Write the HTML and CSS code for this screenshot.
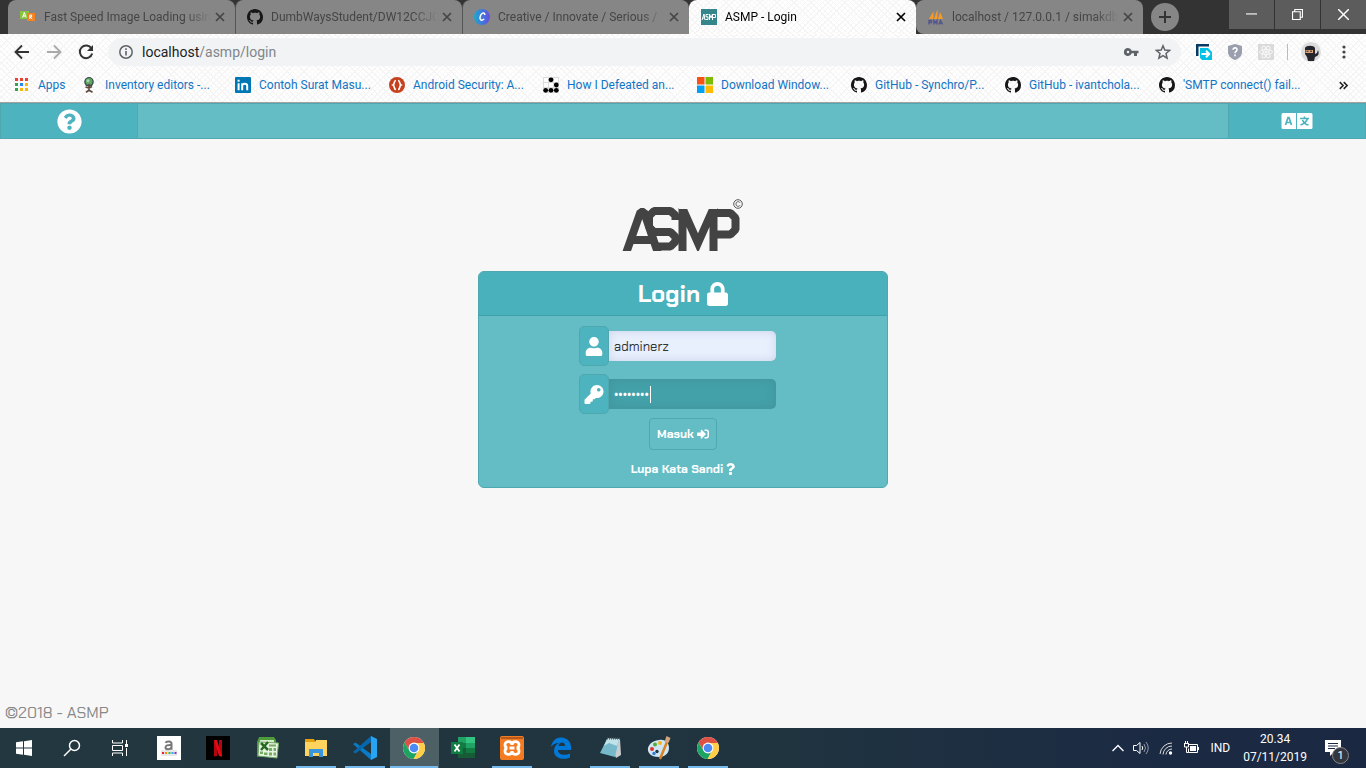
FILE: index.html
```html
<!DOCTYPE html>
<html lang="id">
<head>
<meta charset="utf-8">
<title>ASMP - Login</title>
<link rel="stylesheet" href="styles.css">
</head>
<body>
<svg class="sprite" aria-hidden="true">
  <symbol id="github" viewBox="0 0 16 16"><path fill="#161616" d="M8 0C3.58 0 0 3.58 0 8c0 3.54 2.29 6.53 5.47 7.59.4.07.55-.17.55-.38 0-.19-.01-.82-.01-1.49-2.01.37-2.53-.49-2.69-.94-.09-.23-.48-.94-.82-1.13-.28-.15-.68-.52-.01-.53.63-.01 1.08.58 1.23.82.72 1.21 1.87.87 2.33.66.07-.52.28-.87.51-1.07-1.78-.2-3.64-.89-3.64-3.95 0-.87.31-1.59.82-2.15-.08-.2-.36-1.02.08-2.12 0 0 .67-.21 2.2.82.64-.18 1.32-.27 2-.27s1.36.09 2 .27c1.53-1.04 2.2-.82 2.2-.82.44 1.1.16 1.92.08 2.12.51.56.82 1.27.82 2.15 0 3.07-1.87 3.75-3.65 3.95.29.25.54.73.54 1.48 0 1.07-.01 1.93-.01 2.2 0 .21.15.46.55.38A8.01 8.01 0 0 0 16 8c0-4.42-3.58-8-8-8z"/></symbol>
  <symbol id="close" viewBox="0 0 10 10"><path d="M1 1l8 8M9 1L1 9" stroke="currentColor" stroke-width="1.7" fill="none"/></symbol>
  <symbol id="chrome" viewBox="0 0 24 24"><circle cx="12" cy="12" r="11" fill="#fff"/><path fill="#dd5144" d="M2.47 6.5A11 11 0 0 1 21.53 6.5L21.8 7H12a5 5 0 0 0-4.33 7.5z"/><path fill="#1da462" d="M2.47 6.5A11 11 0 0 0 11.6 23l4.73-8.5A5 5 0 0 1 7.67 14.5z"/><path fill="#ffcd46" d="M21.8 7A11 11 0 0 1 11.6 23l4.73-8.5A5 5 0 0 0 12 7z"/><circle cx="12" cy="12" r="5.4" fill="#fff"/><circle cx="12" cy="12" r="4.3" fill="#4c8bf5"/></symbol>
</svg>

<header class="browser">
  <div class="tabstrip">
    <div class="tabs">
      <div class="tab">
        <svg class="fav" viewBox="0 0 16 16"><path fill="#8ac43f" d="M0 2h9v8H0z"/><path fill="#f58220" d="M7 4h8v8H7z"/><path d="M2.500 8.500l1.800-5 1.800 5M3 7h2.700M9.800 10V6h1.800v2H9.800l2.500 2" stroke="#fff" fill="none"/></svg>
        <span class="title">Fast Speed Image Loading usin</span><button class="x" aria-label="Close tab"><svg><use href="#close"/></svg></button>
      </div>
      <div class="tab split">
        <svg class="fav"><use href="#github"/></svg>
        <span class="title">DumbWaysStudent/DW12CCJC</span><button class="x" aria-label="Close tab"><svg><use href="#close"/></svg></button>
      </div>
      <div class="tab split">
        <svg class="fav" viewBox="0 0 16 16"><defs><linearGradient id="cv" x1="0" x2="1"><stop stop-color="#18a9d2"/><stop offset="1" stop-color="#6a4be0"/></linearGradient></defs><circle cx="8" cy="8" r="8" fill="url(#cv)"/><path d="M10.800 6c.3-3-3-2.500-4.300.5-1.500 3.500.2 6.200 3.700 3.500" stroke="#fff" stroke-width="1.500" fill="none"/></svg>
        <span class="title">Creative / Innovate / Serious /</span><button class="x" aria-label="Close tab"><svg><use href="#close"/></svg></button>
      </div>
      <div class="tab active">
        <svg class="fav" viewBox="0 0 16 16"><path fill="#34868a" d="M0 0h16v16H0z"/><path d="M1 11l2-6 1 6M2 9h2M7.500 5.500H5v2.300h2v2.700H4.500M8.500 11V5l1.500 4 1.500-4v6M12 5.500h2.500v3H12" stroke="#fff" fill="none"/></svg>
        <span class="title">ASMP - Login</span><button class="x" aria-label="Close tab"><svg><use href="#close"/></svg></button>
      </div>
      <div class="tab last">
        <svg class="fav" viewBox="0 0 16 16"><path fill="#f79a28" d="M1 10L5.500 2v8zM6 10L9.500 0v10zM10 10l2-7 3 7z"/><path d="M1 15.500v-4h2.500v2H1M6 15.500v-4l1.500 2 1.500-2v4M11 15.500l1.500-4 2 4M11.500 14H14" stroke="#53568d" stroke-width="1.400" fill="none"/></svg>
        <span class="title">localhost / 127.0.0.1 / simakdb</span><button class="x" aria-label="Close tab"><svg><use href="#close"/></svg></button>
      </div>
    </div>
    <button class="newtab" aria-label="New tab"><svg viewBox="0 0 12 12"><path d="M6 0v12M0 6h12" stroke="#333" stroke-width="2"/></svg></button>
    <div class="winbtns">
      <button aria-label="Minimize"><svg viewBox="0 0 10 10"><path d="M0 4.500h10" stroke="#fff"/></svg></button>
      <button aria-label="Restore"><svg viewBox="0 0 10 10"><path d="M.5 2.500h7v7h-7zM2.500 2.500v-2h7v7h-2" stroke="#fff" fill="none"/></svg></button>
      <button aria-label="Close"><svg viewBox="0 0 10 10"><path d="M0 0l10 10M10 0L0 10" stroke="#fff" stroke-width="1.300"/></svg></button>
    </div>
  </div>

  <div class="toolbar">
    <button class="nav" aria-label="Back"><svg viewBox="0 0 16 16"><path d="M15 8H2M8 1.500L1.500 8 8 14.500" stroke="#333" stroke-width="1.900" fill="none"/></svg></button>
    <button class="nav" aria-label="Forward"><svg viewBox="0 0 16 16"><path d="M1 8h13M8 1.500L14.500 8 8 14.500" stroke="#aaa" stroke-width="1.900" fill="none"/></svg></button>
    <button class="nav" aria-label="Reload"><svg viewBox="0 0 16 16"><path d="M13.500 4.500A6.300 6.300 0 1 0 14.200 9.500" stroke="#333" stroke-width="2" fill="none"/><path d="M15 1v6H9z" fill="#333"/></svg></button>
    <div class="omnibox">
      <svg class="info" viewBox="0 0 14 14"><circle cx="7" cy="7" r="6.200" stroke="#5f6368" stroke-width="1.500" fill="none"/><path d="M7 6v4.500M7 3.300v1.600" stroke="#5f6368" stroke-width="1.600"/></svg>
      <p class="url">localhost<span>/asmp/login</span></p>
      <svg class="mini" viewBox="0 0 16 16"><path fill="#5f6368" fill-rule="evenodd" d="M5 4a4 4 0 1 0 3.700 5.300H11V12h3V9.300h1.500V6.700H8.700A4 4 0 0 0 5 4zm0 2.700a1.300 1.300 0 1 1 0 2.600 1.300 1.300 0 0 1 0-2.600z"/></svg>
      <svg class="mini" viewBox="0 0 16 16"><path d="M8 1.800l1.800 4.300 4.700.4L11 9.500l1.100 4.700L8 11.700l-4.100 2.500L5 9.500 1.500 6.500l4.700-.4z" stroke="#5f6368" stroke-width="1.500" fill="none"/></svg>
    </div>
    <div class="exts">
      <svg viewBox="0 0 16 16"><path fill="#063b66" d="M0 0h13v2.500H2.500V12H0z"/><path fill="#00c2e5" d="M4 4h8l4 4v8H6l-2-2z"/><path d="M5.500 10H13M10 6.800l3.200 3.200-3.200 3.200" stroke="#fff" stroke-width="2" fill="none"/></svg>
      <svg viewBox="0 0 16 16"><path fill="#9a9fae" d="M8 0l7 2v6c0 4-3 6.500-7 8-4-1.500-7-4-7-8V2z"/><path d="M6 5.800C6 3 10.300 3.300 10 6c-.2 1.500-2 1.500-2 3.200M8 10.500v1.700" stroke="#fff" stroke-width="1.600" fill="none"/></svg>
      <svg viewBox="0 0 16 16"><path fill="#dadada" d="M0 0h16v16H0z"/><g fill="none" stroke="#f7f7f7"><ellipse cx="8" cy="8" rx="6.500" ry="2.500"/><ellipse cx="8" cy="8" rx="6.500" ry="2.500" transform="rotate(60 8 8)"/><ellipse cx="8" cy="8" rx="6.500" ry="2.500" transform="rotate(120 8 8)"/></g><circle cx="8" cy="8" r="1.500" fill="#f7f7f7"/></svg>
      <i class="rule"></i>
      <svg class="avatar" viewBox="0 0 20 20"><circle cx="10" cy="10" r="10" fill="#dcdcdc"/><path fill="#24262b" d="M4 6c1-3 9-3 10 0v6l2-1 1-3c1 2 1 5-1 6l-2 1-1 4H7l-1-4-2-3z"/><path fill="#e1a273" d="M4.500 8H12v3H4.500z"/><path d="M5.500 9.200h2M9 9.200h2" stroke="#222"/></svg>
      <svg class="dots" viewBox="0 0 4 16"><g fill="#444"><circle cx="2" cy="3" r="1.600"/><circle cx="2" cy="8" r="1.600"/><circle cx="2" cy="13" r="1.600"/></g></svg>
    </div>
  </div>

  <nav class="bookmarks">
    <a class="apps" href="#"><svg viewBox="0 0 14 14"><path fill="#e94235" d="M0 0h3v3H0zM5 0h3v3H5zM10 0h3v3h-3z"/><path fill="#34a353" d="M0 5h3v3H0zM0 10h3v3H0z"/><path fill="#2a87f0" d="M5 5h3v3H5z"/><path fill="#fbb505" d="M10 5h3v3h-3zM5 10h3v3H5zM10 10h3v3h-3z"/></svg><span>Apps</span></a>
    <a href="#"><svg viewBox="0 0 16 16"><circle cx="8" cy="4.800" r="4.800" fill="#3b4b4d"/><circle cx="8" cy="4.500" r="3.500" fill="#5fa45f"/><circle cx="7" cy="3.700" r="1.500" fill="#a8d6bd"/><path d="M8 7v6M4.500 10L8 11l3-1.500M5 15.200l3-2 3.500 2" stroke="#5f4a40" stroke-width="1.700" fill="none"/></svg><span>Inventory editors -...</span></a>
    <a href="#"><svg viewBox="0 0 16 16"><rect width="16" height="16" rx="1" fill="#0077b5"/><path d="M3.600 6.200v7M3.600 2.800v2M7.200 13.200v-7M7.200 9c0-3 5-3 5 0v4.200" stroke="#fff" stroke-width="2" fill="none"/></svg><span>Contoh Surat Masu...</span></a>
    <a href="#"><svg viewBox="0 0 16 16"><circle cx="8" cy="8" r="8" fill="#c5411e"/><path d="M7 3.500C4.500 3.500 6 7 4 8c2 1 .5 4.500 3 4.500M9 3.500c2.500 0 1 3.500 3 4.500-2 1-.5 4.500-3 4.500" stroke="#fff" stroke-width="1.700" fill="none"/></svg><span>Android Security: A...</span></a>
    <a href="#"><svg viewBox="0 0 16 16"><path d="M.5.500h15v15H.5zM5.500.500v15M10.500.500v15M.5 5.500h15M.5 10.500h15" stroke="#ddd" fill="#fff"/><circle cx="8" cy="2.800" r="2.400"/><circle cx="13.300" cy="8" r="2.400"/><circle cx="2.700" cy="13.300" r="2.400"/><circle cx="8" cy="13.300" r="2.400"/><circle cx="13.300" cy="13.300" r="2.400"/></svg><span>How I Defeated an...</span></a>
    <a href="#"><svg viewBox="0 0 16 16"><path fill="#f65314" d="M0 0h7.500v7.500H0z"/><path fill="#7cbb00" d="M8.500 0H16v7.500H8.500z"/><path fill="#00a1f1" d="M0 8.500h7.500V16H0z"/><path fill="#ffbb00" d="M8.500 8.500H16V16H8.500z"/></svg><span>Download Window...</span></a>
    <a href="#"><svg><use href="#github"/></svg><span>GitHub - Synchro/P...</span></a>
    <a href="#"><svg><use href="#github"/></svg><span>GitHub - ivantchola...</span></a>
    <a href="#"><svg><use href="#github"/></svg><span>'SMTP connect() fail...</span></a>
    <button class="more" aria-label="More bookmarks"><svg viewBox="0 0 8 8"><path d="M.7 1l3 3-3 3M4.200 1l3 3-3 3" stroke="#222" stroke-width="1.300" fill="none"/></svg></button>
  </nav>
</header>

<div class="page">
  <div class="topbar">
    <button class="side" aria-label="Bantuan"><svg class="help" viewBox="0 0 512 512"><path fill="#fff" d="M504 256c0 136.997-111.043 248-248 248S8 392.997 8 256C8 119.083 119.043 8 256 8s248 111.083 248 248zM262.655 90c-54.497 0-89.255 22.957-116.549 63.758-3.536 5.286-2.353 12.415 2.715 16.258l34.699 26.310c5.205 3.947 12.621 3.008 16.665-2.122 17.864-22.658 30.113-35.797 57.303-35.797 20.429 0 45.698 13.148 45.698 32.958 0 14.976-12.363 22.667-32.534 33.976C247.128 238.528 216 254.941 216 296v4c0 6.627 5.373 12 12 12h56c6.627 0 12-5.373 12-12v-1.333c0-28.462 83.186-29.647 83.186-106.667 0-58.002-60.165-102-116.531-102zM256 338c-25.365 0-46 20.635-46 46 0 25.364 20.635 46 46 46s46-20.636 46-46c0-25.365-20.635-46-46-46z"/></svg></button>
    <div class="middle"></div>
    <button class="side" aria-label="Bahasa"><svg class="lang" viewBox="0 0 32 16"><path fill="#fff" d="M2 0h13v16H2a1.500 1.500 0 0 1-1.500-1.500v-13A1.500 1.500 0 0 1 2 0zM16 0h14a1.500 1.500 0 0 1 1.500 1.500v13A1.500 1.500 0 0 1 30 16H16z"/><path d="M4.500 12L7 4.500h1L10.500 12M5.500 9.500h4M19 5.500h9M23.500 3.500v2M26.500 5.500c-1 3.500-4 5.500-7 6.500M21.500 7c1 2.500 3 4.500 6 5" stroke="#4db3be" stroke-width="1.700" fill="none"/></svg></button>
  </div>

  <main>
    <svg class="logo" viewBox="0 0 122 52" role="img" aria-label="ASMP">
      <g fill="none" stroke="#434343" stroke-width="8" stroke-linejoin="bevel">
        <path d="M2 60L18.500 13H22L38 60M11 41h20"/>
        <path d="M53.500 21v-4.500l-5-4.500H32l-5 5V28l5 5H48.500l5 5v4.500l-5 5H34"/>
        <path d="M60.500 60V10M91.500 60V10M60 8L76 44 92 8" stroke-linejoin="miter"/>
        <path d="M88 14h20.500l5 5v11.500l-5 5H92"/>
      </g>
      <path d="M57 0h38v10H57z" fill="#f7f7f7"/>
      <g fill="none" stroke="#555"><circle cx="116" cy="5" r="4.300"/><path d="M118 3.700c-1.500-2-4-1-4 1.300s2.500 3.300 4 1.300"/></g>
    </svg>

    <form class="card">
      <h1>Login <svg class="lock" viewBox="0 0 448 512"><path fill="#fff" d="M400 224h-24v-72C376 68.200 307.800 0 224 0S72 68.200 72 152v72H48c-26.500 0-48 21.500-48 48v192c0 26.500 21.500 48 48 48h352c26.500 0 48-21.500 48-48V272c0-26.500-21.500-48-48-48zm-104 0H152v-72c0-39.700 32.300-72 72-72s72 32.300 72 72v72z"/></svg></h1>
      <div class="row">
        <label for="user" aria-label="Nama pengguna"><svg viewBox="0 0 448 512"><path fill="#fff" d="M224 256c70.700 0 128-57.300 128-128S294.700 0 224 0 96 57.300 96 128s57.300 128 128 128zm89.600 32h-16.700c-22.200 10.200-46.900 16-72.900 16s-50.600-5.800-72.900-16h-16.700C60.200 288 0 348.200 0 422.400V464c0 26.500 21.500 48 48 48h352c26.500 0 48-21.500 48-48v-41.600c0-74.200-60.200-134.400-134.400-134.400z"/></svg></label>
        <input id="user" class="filled" type="text" value="adminerz">
      </div>
      <div class="row">
        <label for="pass" aria-label="Kata sandi"><svg viewBox="0 0 512 512"><path fill="#fff" d="M512 176.001C512 273.203 433.202 352 336 352c-11.220 0-22.190-1.062-32.827-3.069l-24.012 27.014A23.999 23.999 0 0 1 261.223 384H224v40c0 13.255-10.745 24-24 24h-40v40c0 13.255-10.745 24-24 24H24c-13.255 0-24-10.745-24-24v-78.059c0-6.365 2.529-12.470 7.029-16.971l161.802-161.802C163.108 213.814 160 195.271 160 176 160 78.798 238.797.001 335.999 0 433.488-.001 512 78.511 512 176.001zM336 128c0 26.510 21.490 48 48 48s48-21.490 48-48-21.490-48-48-48-48 21.490-48 48z"/></svg></label>
        <input id="pass" type="password" value="password">
        <i class="caret"></i>
      </div>
      <button class="submit" type="button">Masuk <svg viewBox="0 0 512 512"><path fill="#fff" d="M416 448h-84c-6.600 0-12-5.400-12-12v-40c0-6.600 5.400-12 12-12h84c17.700 0 32-14.300 32-32V160c0-17.700-14.300-32-32-32h-84c-6.600 0-12-5.400-12-12V76c0-6.600 5.400-12 12-12h84c53 0 96 43 96 96v192c0 53-43 96-96 96zm-47-201L201 79c-15-15-41-4.500-41 17v96H24c-13.300 0-24 10.700-24 24v96c0 13.300 10.700 24 24 24h136v96c0 21.500 26 32 41 17l168-168c9.300-9.400 9.300-24.600 0-34z"/></svg></button>
      <a class="forgot" href="#">Lupa Kata Sandi <svg viewBox="0 0 384 512"><path fill="#fff" d="M202.021 0C122.202 0 70.503 32.703 29.914 91.026c-7.363 10.580-5.093 25.086 5.178 32.874l43.138 32.709c10.373 7.865 25.132 6.026 33.253-4.148 25.049-31.381 43.630-49.449 82.757-49.449 30.764 0 68.816 19.799 68.816 49.631 0 22.552-18.617 34.134-48.993 51.164-35.423 19.860-82.299 44.576-82.299 106.405V320c0 13.255 10.745 24 24 24h72.471c13.255 0 24-10.745 24-24v-5.773c0-42.860 125.268-44.645 125.268-160.627C377.504 66.256 286.902 0 202.021 0zM192 373.459c-38.196 0-69.271 31.075-69.271 69.271 0 38.195 31.075 69.270 69.271 69.270s69.271-31.075 69.271-69.270-31.075-69.271-69.271-69.271z"/></svg></a>
    </form>
  </main>
  <footer>©2018 - ASMP</footer>
</div>

<div class="taskbar">
  <div class="launch">
    <button aria-label="Start"><svg viewBox="0 0 24 24"><path fill="#fff" d="M4 6.300l7-1v6.200H4zM12 5.200L20 4v7.500h-8zM4 12.500h7v6.200l-7-1zM12 12.500h8V20l-8-1.200z"/></svg></button>
    <button aria-label="Search"><svg viewBox="0 0 24 24"><circle cx="14.500" cy="9.500" r="5" stroke="#fff" stroke-width="1.500" fill="none"/><path d="M11 13l-7 7" stroke="#fff" stroke-width="1.500"/></svg></button>
    <button aria-label="Task view"><svg viewBox="0 0 24 24"><path d="M4.500 4v3h10V4M4.500 20v-3h10v3M4.500 9.500h10v5h-10zM18.500 4v4M18.500 12v8" stroke="#fff" fill="none"/><path fill="#fff" d="M17 8h3v3h-3z"/></svg></button>
    <button aria-label="Amazon"><svg viewBox="0 0 24 24"><path fill="#fff" d="M0 0h24v24H0z"/><path fill="#e8e8e8" d="M4 14h16v6H4z"/><path d="M8.500 6.800c1-2 6-2 6 .8v6.200M14.500 9c-4-.2-6 .5-6 2.500s4 3 6-.3" stroke="#777" stroke-width="2" fill="none"/><path stroke-width="2" stroke="#e22" d="M5 17h2"/><path stroke-width="2" stroke="#f80" d="M8 17h2"/><path stroke-width="2" stroke="#3b5" d="M11.500 17h2"/><path stroke-width="2" stroke="#3ae" d="M14.500 17h2"/><path stroke-width="2" stroke="#83c" d="M17.500 17h2"/></svg></button>
    <button aria-label="Netflix"><svg viewBox="0 0 24 24"><path d="M0 0h24v24H0z"/><path fill="#b20710" d="M8 4h3v16l-3 .5zM13 4h3v16.500l-3-.5z"/><path fill="#e50914" d="M8 4h3l5 16.500-3-.5z"/></svg></button>
    <button aria-label="Spreadsheet"><svg viewBox="0 0 24 24"><path fill="#4e9b3c" d="M4 1h15l2 3v6L2 21V6z"/><path fill="#d5ebcb" d="M5 4h14v8H4z"/><path fill="#e8f4e2" stroke="#71a865" d="M4 6l19.500 1-1.500 15-19-2z"/><path fill="#4d943c" d="M14 8.500h7v2h-7zM14 12h3v3h-3zM18.500 12H21v3h-2.500zM9 16.500h3.500v2.500H9zM14 16.500h3v3h-3zM18.500 16.500H21v3h-2.500zM5 15.500h3V18H5z" opacity=".75"/><path d="M6 7l7 7M13 6l-7 8" stroke="#276b22" stroke-width="2.500"/></svg></button>
    <button class="open" aria-label="File Explorer"><svg viewBox="0 0 24 24"><path fill="#e5a00d" d="M1 3h9l1 2v3H1z"/><path fill="#ffd45e" d="M1 6h10l1-2h11v16H1z"/><path fill="#3a96dd" d="M5 13h14v8h-4v-4H9v4H5z"/></svg></button>
    <button class="open" aria-label="Visual Studio Code"><svg viewBox="0 0 24 24"><path fill="#0a7bc7" d="M0 8l2.500-1.500L18 18v6z"/><path fill="#0767ac" d="M0 16l2.500 1.500L18 6V0z"/><path fill="#29a4f2" d="M18 0l6 3v18l-6 3z"/></svg></button>
    <button class="open current" aria-label="Chrome"><svg><use href="#chrome"/></svg></button>
    <button aria-label="Excel"><svg viewBox="0 0 24 24"><path fill="#21a366" d="M7 1h8v6H7z"/><path fill="#33c481" d="M15 1h9v6h-9z"/><path fill="#107c41" d="M7 7h8v5H7zM15 12h9v5h-9z"/><path fill="#21a366" d="M15 7h9v5h-9z"/><path fill="#185c37" d="M7 12h8v5H7zM7 17h17v5H7z"/><path fill="#107c41" d="M0 6h12v12H0z"/><path d="M3.500 8.500l5 7M8.500 8.500l-5 7" stroke="#fff" stroke-width="1.800"/></svg></button>
    <button class="open" aria-label="XAMPP"><svg viewBox="0 0 24 24"><rect width="24" height="24" rx="2" fill="#f47b20"/><path fill="#b75a1b" d="M1 1h22v2H1z"/><path d="M12 9C12 4.500 5 4.500 5 8.500c0 2 1 3.500 2.500 3.500C6 12 5 13.500 5 15.500c0 4 7 4 7-.5 0 4.500 7 4.500 7 .5 0-2-1-3.500-2.500-3.500 1.500 0 2.500-1.500 2.500-3.500 0-4-7-4-7 .5zM9.500 12h5" stroke="#fff" stroke-width="2.800" fill="none"/></svg></button>
    <button aria-label="Edge"><svg viewBox="0 0 24 24"><path fill="#0078d7" fill-rule="evenodd" d="M2 11C3 5 7 1 12.500 1.500 18 2 22 5.500 22 11v3H9c0 5 7 6 12 3.500v4C16 24 5 23.500 5 15c0-4 2-6.500 5-8-3.500 0-6 1.500-8 4zm7.500-1H16c0-5-6-4.500-6.500 0z"/></svg></button>
    <button class="open" aria-label="Notepad"><svg viewBox="0 0 24 24"><path fill="#c9ced0" d="M9 2l13 1 1 16-5 3z"/><path fill="#75b9cb" d="M9 3h12l-4 18-15-4z"/><path fill="#c0e2e9" d="M9 3h12l-2 7-8-3-5 3z"/><path d="M9 2.500h13" stroke="#555" stroke-dasharray="1 1" stroke-width="2"/></svg></button>
    <button class="open" aria-label="Paint"><svg viewBox="0 0 24 24"><path fill="#cfe6f5" d="M12 4c7-1 10 3 10 8 0 6-5 9-10 9-4 0-8-1-10-4-3-4 0-12 10-13z"/><circle cx="10" cy="15.500" r="1.700" fill="#22373f"/><circle cx="5" cy="13" r="2" fill="#e0352b"/><circle cx="8" cy="8.500" r="2" fill="#55ad38"/><circle cx="13" cy="7" r="2" fill="#f1b51f"/><circle cx="7" cy="17.500" r="1.700" fill="#327ecc"/><path d="M20 6l-7 17" stroke="#db8120" stroke-width="2.500"/><path fill="#d4a77b" d="M17.500 6l2-6 4 2-2 5z"/></svg></button>
    <button class="open" aria-label="Chrome"><svg><use href="#chrome"/></svg></button>
  </div>
  <div class="tray">
    <svg viewBox="0 0 16 16"><path d="M4.500 11L10 5.500l5.500 5.500" stroke="#fff" stroke-width="1.400" fill="none"/></svg>
    <svg viewBox="0 0 16 16"><path d="M.5 5.500h3l3.500-3v11l-3.500-3h-3z" stroke="#fff" fill="none"/><path d="M9 6q1.500 2 0 4" stroke="#fff" fill="none"/><path d="M11 4q3 4 0 8M13 2q4.500 6 0 12" stroke="#8d96a8" fill="none"/></svg>
    <svg viewBox="0 0 16 16"><path d="M2 14A12 12 0 0 1 14 3M5 14.500a9 9 0 0 1 9-8.500M8 14.500A6 6 0 0 1 14 9" stroke="#ddd" fill="none"/><circle cx="12.500" cy="13" r="1.700" fill="#fff"/></svg>
    <svg viewBox="0 0 16 16"><path d="M6 4.500h8.500v8h-9v-4M1 3.500h5M1.500 4v3h4V4M2.500 1v3M4.500 1v3M3.500 7v5.500h2" stroke="#fff" fill="none"/><path fill="#fff" d="M7 6h6v5H7zM15 7h1v3h-1z"/></svg>
    <span class="ime">IND</span>
    <div class="clock"><span>20.34</span><span>07/11/2019</span></div>
    <button class="notes" aria-label="Notifications"><svg viewBox="0 0 16 16"><path fill="#fff" d="M0 0h16v12H9l-4 4v-4H0z"/><path d="M3 3.500h10M3 6h10M3 8.500h7" stroke="#1b2842"/></svg><span class="count">1</span></button>
  </div>
</div>
</body>
</html>
```
FILE: styles.css
```css
* { box-sizing: border-box; }
body {
  margin: 0;
  min-height: 100vh;
  display: flex;
  flex-direction: column;
  font: 12px/16px "Segoe UI", Roboto, "Open Sans", sans-serif;
  background: #f7f7f7;
}
button { border: 0; padding: 0; background: none; color: inherit; font: inherit; }
svg { display: block; flex: none; }
a { text-decoration: none; }
.sprite { width: 0; height: 0; position: absolute; }

/* browser chrome */
.browser, .tab.active {
  background: repeating-linear-gradient(45deg, #f5f5f5 0 1px, transparent 1px 4px),
    repeating-linear-gradient(-45deg, #f5f5f5 0 1px, transparent 1px 4px), #fff;
}
.browser { border-bottom: 1px solid #a3a3a3; }
.tabstrip { display: flex; height: 34px; background: #333; }
.tabs { display: flex; flex: 0 1 1135px; margin-left: 8px; min-width: 0; }
.tab {
  flex: 1;
  min-width: 0;
  display: flex;
  align-items: center;
  gap: 8px;
  padding: 0 10px 0 12px;
  background: #868686;
  color: #454545;
  border-radius: 8px 8px 0 0;
}
.tab.split { border-left: 1px solid #555; padding-left: 11px; }
.tab.active { color: #000; }
.tab.last { border-bottom-left-radius: 8px; }
.fav { width: 16px; height: 16px; }
.title {
  flex: 1;
  margin-right: -4px;
  overflow: hidden;
  white-space: nowrap;
  -webkit-mask-image: linear-gradient(90deg, #000 85%, transparent);
  mask-image: linear-gradient(90deg, #000 85%, transparent);
}
.x svg { width: 10px; height: 10px; }
.newtab {
  width: 28px;
  height: 28px;
  margin: 3px auto 0 8px;
  border-radius: 50%;
  background: #868686;
  display: grid;
  place-items: center;
}
.newtab svg { width: 12px; height: 12px; }
.winbtns { display: flex; gap: 1px; height: 29px; }
.winbtns button { width: 45px; background: #5c5c5c; display: grid; place-items: center; }
.winbtns svg { width: 11px; height: 11px; }

.toolbar { display: flex; align-items: center; height: 36px; padding: 0 20px 0 14px; }
.nav { margin-right: 16px; }
.nav svg { width: 16px; height: 16px; }
.nav:nth-of-type(3) { margin-right: 14px; }
.omnibox {
  flex: 1;
  display: flex;
  align-items: center;
  gap: 16px;
  height: 28px;
  padding: 0 10px 0 11px;
  border-radius: 14px;
  background: #f1f3f4;
}
.info { width: 14px; height: 14px; }
.url { flex: 1; margin: 0 0 0 -7px; font-size: 14px; line-height: 20px; color: #202124; }
.url span { color: #80868b; }
.mini { width: 16px; height: 16px; }
.exts { display: flex; align-items: center; gap: 15px; margin-left: 15px; }
.exts svg { width: 16px; height: 16px; }
.exts .avatar { width: 20px; height: 20px; margin-right: 6px; }
.exts .dots { width: 4px; }
.rule { width: 1px; height: 16px; margin: 0 -2px; background: #bbb; }

.bookmarks { display: flex; align-items: center; height: 32px; padding: 0 18px 2px 15px; }
.bookmarks a { flex: 0 1 154px; min-width: 0; display: flex; align-items: center; gap: 8px; color: #1274c4; white-space: nowrap; }
.bookmarks .apps { flex-basis: 66px; gap: 9px; }
.bookmarks a svg { width: 16px; height: 16px; }
.bookmarks .apps svg { width: 14px; height: 14px; }
.more { margin-left: auto; }
.more svg { width: 9px; height: 9px; }

/* login page */
.page {
  flex: 1;
  display: flex;
  flex-direction: column;
  font-family: "Chakra Petch", Inter, sans-serif;
}
.topbar { display: flex; height: 36px; background: #64bdc5; border: 1px solid #4fa8b0; }
.side { width: 10%; display: grid; place-items: center; background: #4db3be; }
.middle { flex: 1; border: solid #4fa8b0; border-width: 0 1px; }
.help { width: 25px; height: 25px; }
.lang { width: 32px; height: 16px; }
main { flex: 1; display: flex; flex-direction: column; align-items: center; padding-top: 60px; }
.logo { width: 122px; height: 52px; }
.card {
  width: 30%;
  min-width: 320px;
  margin-top: 20px;
  padding-bottom: 10px;
  display: flex;
  flex-direction: column;
  align-items: center;
  background: #64bdc5;
  border: 1px solid #4fa8b0;
  border-radius: 6px;
  color: #fff;
  overflow: hidden;
}
h1 {
  align-self: stretch;
  display: flex;
  align-items: center;
  justify-content: center;
  gap: 7px;
  height: 44px;
  margin: 0 0 10px;
  font-size: 24px;
  line-height: 32px;
  background: #48b1bb;
  border-bottom: 1px solid #3fa2aa;
}
.lock { width: 21px; height: 24px; }
.row { position: relative; display: flex; align-items: center; height: 40px; margin: 0 11px 8px 0; }
.row label {
  width: 30px;
  height: 40px;
  display: grid;
  place-items: center;
  background: #4db3be;
  border: 1px solid #4fa8b0;
  border-radius: 5px;
}
.row label svg { width: 20px; height: 19px; }
.row input {
  width: 167px;
  height: 30px;
  padding: 0 5px;
  border: 0;
  border-radius: 0 5px 5px 0;
  font: 13px/20px "Chakra Petch", Inter, sans-serif;
  color: #fff;
  background: #43a1a9;
  box-shadow: inset 0 0 10px rgba(70, 110, 120, .3);
  outline: 0;
}
.row .filled { color: #333; background: #e8f0fe; box-shadow: inset 0 0 8px rgba(120, 120, 160, .25); }
.caret { position: absolute; left: 71px; top: 12px; width: 1px; height: 17px; background: #fff; }
.submit {
  display: flex;
  align-items: center;
  gap: 3px;
  height: 32px;
  margin-top: -4px;
  padding: 0 7px;
  border: 1px solid #4fa8b0;
  border-radius: 4px;
  font-size: 12px;
  font-weight: 800;
}
.submit svg { width: 12px; height: 12px; }
.forgot { display: flex; align-items: center; gap: 3px; margin-top: 11px; color: #fff; font-weight: 800; }
.forgot svg { width: 9px; height: 12px; }
footer { padding: 0 5px 5px; font-size: 16px; line-height: 20px; color: #888; }

/* taskbar */
.taskbar {
  display: flex;
  justify-content: space-between;
  height: 40px;
  color: #fff;
  background: linear-gradient(90deg, #22373f, #20343f 55%, #1b2a43 85%, #1b2841);
}
.launch { display: flex; }
.launch button { width: 49px; padding: 8px 1px 0 0; display: flex; flex-direction: column; align-items: center; }
.launch button:nth-child(-n+2) { width: 48px; padding-right: 0; }
.launch svg { width: 24px; height: 24px; }
.open::after { content: ""; width: 40px; height: 2px; margin-top: 6px; background: #76b9ed; }
.launch .current { background: #4d6066; }
.current::after { width: 48px; }
.tray { display: flex; align-items: center; gap: 9px; padding-right: 25px; }
.tray svg { width: 16px; height: 16px; }
.ime { margin-left: 2px; }
.clock { display: flex; flex-direction: column; align-items: center; gap: 2px; margin: 0 9px 0 4px; }
.notes { position: relative; }
.count {
  position: absolute;
  left: 7px;
  top: 7px;
  width: 17px;
  height: 17px;
  border: 1px solid #888;
  border-radius: 50%;
  background: #33373d;
  font-size: 11px;
  line-height: 15px;
  text-align: center;
}
```
